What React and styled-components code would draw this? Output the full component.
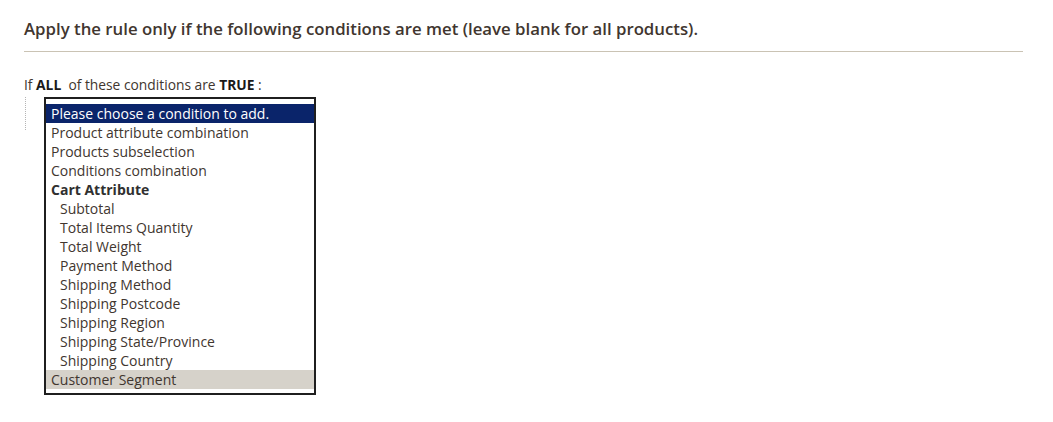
import React from "react";
import styled, { createGlobalStyle } from "styled-components";

const GlobalStyle = createGlobalStyle`
  html, body {
    margin: 0;
    padding: 0;
    background: #fff;
  }
  body {
    font-family: "Open Sans", "Liberation Sans", sans-serif;
    color: #41362f;
  }
`;

const Page = styled.div`
  padding: 19px 30px 0 24px;
`;

const Legend = styled.h2`
  margin: 0;
  padding: 0 0 12px 0;
  font-size: 16.8px;
  font-weight: 600;
  line-height: 20px;
  color: #41362f;
  border-bottom: 1px solid #cac3b4;
`;

const RuleLabel = styled.div`
  margin-top: 24px;
  font-size: 13.8px;
  line-height: 18px;
  color: #41362f;
  white-space: pre;

  b {
    font-weight: 700;
    color: #1a1a1a;
  }
`;

const Tree = styled.div`
  margin-top: 3px;
  padding-left: 20px;
  position: relative;

  &::before {
    content: "";
    position: absolute;
    left: 1px;
    top: 0;
    height: 33px;
    border-left: 1px dotted #b5b5b5;
  }
`;

const ListBox = styled.div`
  width: 268px;
  border: 2px solid #1f1f1f;
  padding: 5px 0 4px;
  background: #fff;
`;

const Option = styled.div`
  height: 19px;
  line-height: 19px;
  font-size: 14px;
  padding-left: ${(p) => (p.$child ? 14 : 5)}px;
  font-weight: ${(p) => (p.$group ? 700 : 400)};
  white-space: nowrap;
  color: ${(p) => (p.$selected ? "#fff" : p.$group ? "#303030" : "#41362f")};
  background: ${(p) =>
    p.$selected ? "#0a246a" : p.$hover ? "#d6d2ca" : "transparent"};
`;

const top = [
  "Product attribute combination",
  "Products subselection",
  "Conditions combination",
];

const cart = [
  "Subtotal",
  "Total Items Quantity",
  "Total Weight",
  "Payment Method",
  "Shipping Method",
  "Shipping Postcode",
  "Shipping Region",
  "Shipping State/Province",
  "Shipping Country",
];

export default function App() {
  return (
    <>
      <GlobalStyle />
      <Page>
        <Legend>
          Apply the rule only if the following conditions are met (leave blank
          for all products).
        </Legend>
        <RuleLabel>
          If <b>ALL</b>{"  "}of these conditions are <b>TRUE</b> :
        </RuleLabel>
        <Tree>
          <ListBox>
            <Option $selected>Please choose a condition to add.</Option>
            {top.map((t) => (
              <Option key={t}>{t}</Option>
            ))}
            <Option $group>Cart Attribute</Option>
            {cart.map((t) => (
              <Option key={t} $child>
                {t}
              </Option>
            ))}
            <Option $hover>Customer Segment</Option>
          </ListBox>
        </Tree>
      </Page>
    </>
  );
}
